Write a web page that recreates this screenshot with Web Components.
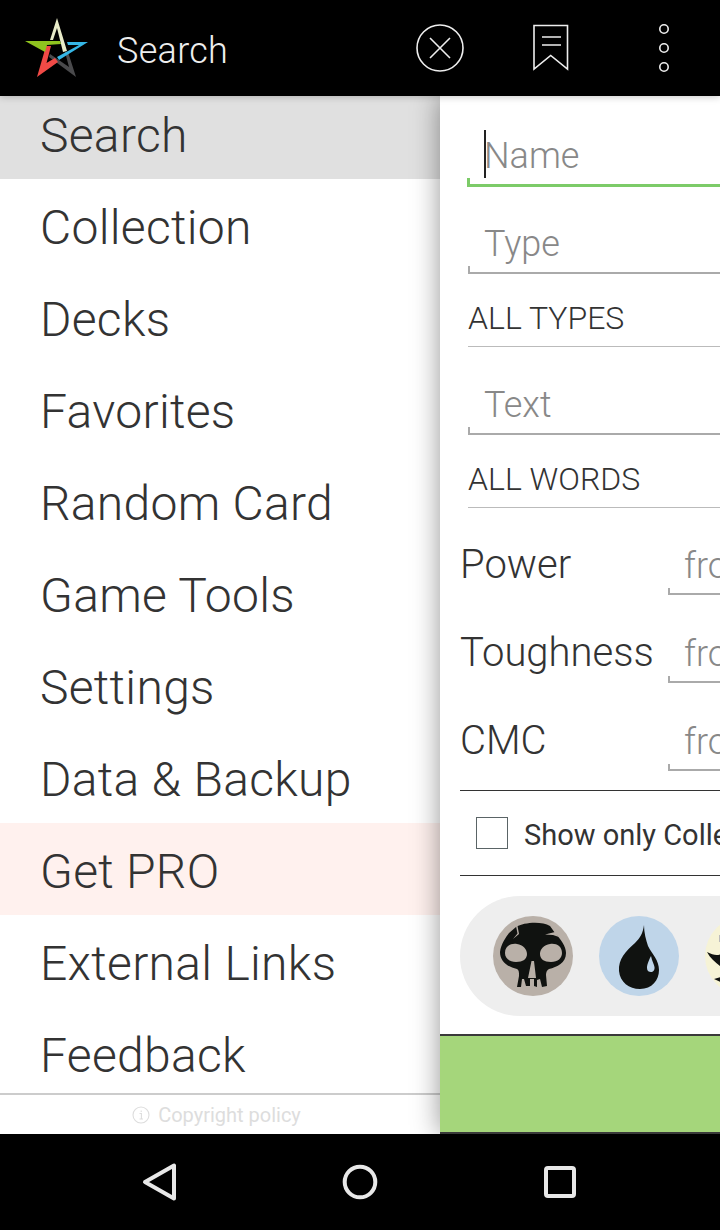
<!DOCTYPE html>
<html>
<head>
<meta charset="utf-8">
<title>Search</title>
<style>
  html, body { margin: 0; padding: 0; background: #000; }
  body { width: 720px; height: 1230px; overflow: hidden; font-family: Roboto, "Liberation Sans", sans-serif; }
</style>
</head>
<body>
<app-shell>
  <top-bar slot="top" title-text="Search"></top-bar>
  <nav-drawer slot="drawer">
    <drawer-item selected>Search</drawer-item>
    <drawer-item>Collection</drawer-item>
    <drawer-item>Decks</drawer-item>
    <drawer-item>Favorites</drawer-item>
    <drawer-item>Random Card</drawer-item>
    <drawer-item>Game Tools</drawer-item>
    <drawer-item>Settings</drawer-item>
    <drawer-item>Data &amp; Backup</drawer-item>
    <drawer-item promo>Get PRO</drawer-item>
    <drawer-item>External Links</drawer-item>
    <drawer-item>Feedback</drawer-item>
  </nav-drawer>
  <search-panel slot="panel">
    <text-field focused placeholder="Name"></text-field>
    <text-field placeholder="Type"></text-field>
    <select-row>ALL TYPES</select-row>
    <text-field placeholder="Text"></text-field>
    <select-row>ALL WORDS</select-row>
    <range-row label="Power" style="margin-top:1px"></range-row>
    <range-row label="Toughness"></range-row>
    <range-row label="CMC"></range-row>
    <check-row>Show only Collection</check-row>
    <mana-pill></mana-pill>
  </search-panel>
  <system-bar slot="bottom"></system-bar>
</app-shell>

<script>
  function define(name, html) {
    const template = document.createElement("template");
    template.innerHTML = html;
    customElements.define(
      name,
      class extends HTMLElement {
        constructor() {
          super();
          this.attachShadow({ mode: "open" });
          this.shadowRoot.append(template.content.cloneNode(true));
        }
        connectedCallback() {
          this.shadowRoot.querySelectorAll("[data-attr]").forEach((el) => {
            el.textContent = this.getAttribute(el.dataset.attr);
          });
        }
      }
    );
  }

  define("app-shell", /* html */ `
<style>
  :host { display: grid; grid-template: 96px 1038px 96px / 440px 280px; width: 720px; height: 1230px; }
  .top { grid-column: 1 / 3; position: relative; z-index: 3; }
  .drawer { overflow: hidden; }
  .panel { position: relative; z-index: 1; box-shadow: 0 0 26px rgba(0,0,0,.42); min-width: 0; }
  .bottom { grid-column: 1 / 3; position: relative; z-index: 3; }
</style>
<div class="top"><slot name="top"></slot></div>
<div class="drawer"><slot name="drawer"></slot></div>
<div class="panel"><slot name="panel"></slot></div>
<div class="bottom"><slot name="bottom"></slot></div>
`);

  define("top-bar", /* html */ `
<style>
  :host { display: flex; align-items: center; height: 96px; background: #000; color: #eee;
    box-shadow: 0 1px 7px rgba(0,0,0,.22); }
  .logo { width: 70px; height: 66px; margin-left: 22px; flex: none; margin-top: -2px; }
  h1 { margin: 5px 0 0 25px; font: 300 36px/96px Roboto, sans-serif; letter-spacing: .3px; width: 278px; flex: none; }
  svg.i { flex: none; fill: none; stroke: #eee; }
</style>
<svg class="logo" viewBox="22 14 70 66">
  <polygon fill="#4a4a4c" points="49,57 50,54 69,67 65,52 68,52 76,77"/>
  <polygon fill="#f04a46" points="46,46 51,46 46.500,63 55,58 58,62 37,77"/>
  <polygon fill="#e8ebc8" points="57,18 67,51 63,52 57,28 53,40 50,40"/>
  <polygon fill="#8fc31f" points="25,41 60,41 61,44 47,45 45,52"/>
  <polygon fill="#35b6e6" points="67,42 88,42 59,60 57,57 79,45 68,45"/>
</svg>
<h1 data-attr="title-text"></h1>
<svg class="i" width="50" height="50" viewBox="0 0 50 50" style="margin-left:20px" stroke-width="1.6">
  <circle cx="25" cy="25" r="23"/><path d="M15 15 35 35M35 15 15 35"/>
</svg>
<svg class="i" width="40" height="48" viewBox="0 0 40 48" style="margin-left:66px" stroke-width="1.6">
  <path d="M3 1.500H36.500V45L19.700 31.500 3 45Z"/><path d="M11 13H30M11 21H30"/>
</svg>
<svg class="i" width="14" height="52" viewBox="0 0 14 52" style="margin-left:86px" stroke-width="1.6">
  <circle cx="7" cy="7" r="4.200"/><circle cx="7" cy="26" r="4.200"/><circle cx="7" cy="45" r="4.200"/>
</svg>
`);

  define("nav-drawer", /* html */ `
<style>
  :host { display: flex; flex-direction: column; height: 1038px; background: #fff; }
  .list { flex: 1; min-height: 0; overflow: hidden; }
  .inner { margin-top: -9px; }
  footer { height: 39px; border-top: 2px solid #ccc; flex: none; display: flex; align-items: center; justify-content: center;
    gap: 8px; color: #ddd; font: 400 20px Roboto, sans-serif; padding: 0 7px 0 0; }
</style>
<div class="list"><div class="inner"><slot></slot></div></div>
<footer>
  <svg width="18" height="18" viewBox="0 0 18 18" fill="none" stroke="#ddd" stroke-width="1.1">
    <circle cx="9" cy="9" r="8"/><path d="M7.500 7.500H9.400V13M7.500 13H11M9.200 4.400V6" />
  </svg>
  <span>Copyright policy</span>
</footer>
`);

  define("drawer-item", /* html */ `
<style>
  :host { display: block; height: 92px; box-sizing: border-box; padding-left: 40px; color: #333;
    font: 300 48px/92px Roboto, sans-serif; letter-spacing: .3px; white-space: nowrap; background: #fff; }
  :host([selected]) { background: #e0e0e0; }
  :host([promo]) { background: #fff1ee; }
  span { position: relative; top: 3px; }
</style>
<span><slot></slot></span>
`);

  define("search-panel", /* html */ `
<style>
  :host { display: flex; flex-direction: column; width: 280px; height: 1038px; overflow: hidden; background: #fff; }
  .form { flex: 1; min-height: 0; padding: 0 0 0 20px; width: 420px; box-sizing: border-box; display: flex; flex-direction: column; }
  .go { flex: none; height: 96px; background: #a5d67b; border-top: 2px solid #3a3a3a; border-bottom: 2px solid #3a3a3a; }
</style>
<div class="form"><slot></slot></div>
<div class="go"></div>
`);

  define("text-field", /* html */ `
<style>
  :host { display: block; margin: 0 0 0 8px; height: 88px; box-sizing: border-box; position: relative; flex: none; }
  .label { position: absolute; left: 16px; bottom: 6px; font: 300 36px/48px Roboto, sans-serif; color: #888; }
  .line { position: absolute; left: 0; right: 0; bottom: 0; height: 2px; background: #aaa; }
  .tick { position: absolute; left: 0; bottom: 0; width: 2px; height: 8px; background: #aaa; }
  .caret { display: none; position: absolute; left: 17px; bottom: 9px; width: 1.500px; height: 48px; background: #222; }
  :host([focused]) { height: 91px; margin: 0 0 -1px 7px; }
  :host([focused]) .label { left: 17px; bottom: 7px; }
  :host([focused]) .line { height: 3px; background: #7ccb68; }
  :host([focused]) .tick { width: 3px; height: 9px; background: #7ccb68; }
  :host([focused]) .caret { display: block; }
</style>
<span class="label" data-attr="placeholder"></span>
<span class="caret"></span>
<span class="line"></span><span class="tick"></span>
`);

  define("select-row", /* html */ `
<style>
  :host { display: block; margin-left: 8px; height: 73px; box-sizing: border-box; border-bottom: 1px solid #bbb; flex: none;
    font: 300 32px/89px Roboto, sans-serif; color: #333; white-space: nowrap; }
</style>
<slot></slot>
`);

  define("range-row", /* html */ `
<style>
  :host { display: flex; height: 88px; align-items: stretch; flex: none; }
  .name { flex: none; width: 208px; font: 300 40px/112px Roboto, sans-serif; color: #333; white-space: nowrap; }
  .field { flex: none; width: 180px; position: relative; }
  .field span { position: absolute; left: 16px; top: 33px; font: 300 36px/48px Roboto, sans-serif; color: #888; }
  .field i { position: absolute; left: 0; right: 0; top: 84px; height: 2px; background: #aaa; }
  .field b { position: absolute; left: 0; top: 79px; width: 2px; height: 7px; background: #aaa; }
</style>
<div class="name" data-attr="label"></div>
<div class="field"><span>from</span><i></i><b></b></div>
`);

  define("check-row", /* html */ `
<style>
  :host { display: flex; align-items: center; height: 84px; margin-top: 17px; gap: 16px; padding-left: 16px; flex: none;
    border-top: 1px solid #333; border-bottom: 1px solid #333; box-sizing: content-box;
    font: 400 29px Roboto, sans-serif; color: #333; white-space: nowrap; }
  .box { width: 30px; height: 30px; flex: none; border: 1px solid #5a6466; }
  span { margin-top: 4px; }
</style>
<div class="box"></div><span><slot></slot></span>
`);

  define("mana-pill", /* html */ `
<style>
  :host { display: flex; align-items: center; gap: 26px; height: 120px; margin-top: 20px; padding-left: 33px;
    background: #eee; border-radius: 60px; box-sizing: border-box; width: 420px; flex: none; }
  svg { flex: none; }
</style>
<svg width="80" height="80" viewBox="0 0 80 80">
  <circle cx="40" cy="40" r="40" fill="#b9b0a8"/>
  <path fill="#101210" d="M23 11C31 6 49 5 57 10L62 17C68 24 73 30 73 37 73 47 64 51 56 53 54 54 53 56 53 59L54 70 49 71 47 63 44 64 44 71 41 70 41 63 37 63 37 70 33 70 31 63 29 63 28 71 24 71 26 60C26 56 26 54 24 53 14 51 7 45 7 36 8 28 13 21 16 17Z"/>
  <path fill="#b9b0a8" d="M23 10 24.500 10 26 18 20 23 24.500 17.500ZM62 16 52 18.500 60 19 66 21ZM12 37C12 30 18 27 24 28 30 29 34 33 34 38 34 43 30 46 23 46 16 46 12 42 12 37ZM69 37C69 30 63 27 57 28 51 29 47 33 47 38 47 43 51 46 58 46 65 46 69 42 69 37ZM38.500 45 35 62H43L41 45Z"/>
</svg>
<svg width="80" height="80" viewBox="0 0 80 80">
  <circle cx="40" cy="40" r="40" fill="#bfd5e9"/>
  <path fill="#101210" d="M45 9C44 17 41 22 36 27 27 35 19 43 20 55 21 66 30 73 41 73 53 73 60 64 60 54 60 44 53 38 49 30 47 24 45 17 45 9Z"/>
  <path fill="#bfd5e9" d="M52 40C49 46 48 49 48 52 48 55 50 56 52 56 54 56 56 54 55.500 51 55 48 53 45 52 40Z"/>
</svg>
<svg width="80" height="80" viewBox="0 0 80 80">
  <circle cx="40" cy="40" r="40" fill="#f6f3d6"/>
  <path fill="#101210" d="M2 36C8 39 12 40 16 38L24 30V50H15C10 46 5 42 2 36ZM9 63 20 60V68Z"/>
  <rect x="14" y="19" width="4" height="7" fill="#bbb"/>
</svg>
`);

  define("system-bar", /* html */ `
<style>
  :host { display: flex; height: 96px; background: #000; align-items: center; justify-content: center; }
  svg { flex: none; fill: none; stroke: #e8e8e8; stroke-width: 4; stroke-linejoin: round; }
</style>
<svg width="40" height="40" viewBox="0 0 40 40"><path d="M5 20 34 3.500V36.500Z"/></svg>
<svg width="40" height="40" viewBox="0 0 40 40" style="margin-left:160px"><circle cx="20" cy="20" r="15.300"/></svg>
<svg width="40" height="40" viewBox="0 0 40 40" style="margin-left:160px"><rect x="6" y="6" width="28" height="28" rx="2"/></svg>
`);
</script>
</body>
</html>
